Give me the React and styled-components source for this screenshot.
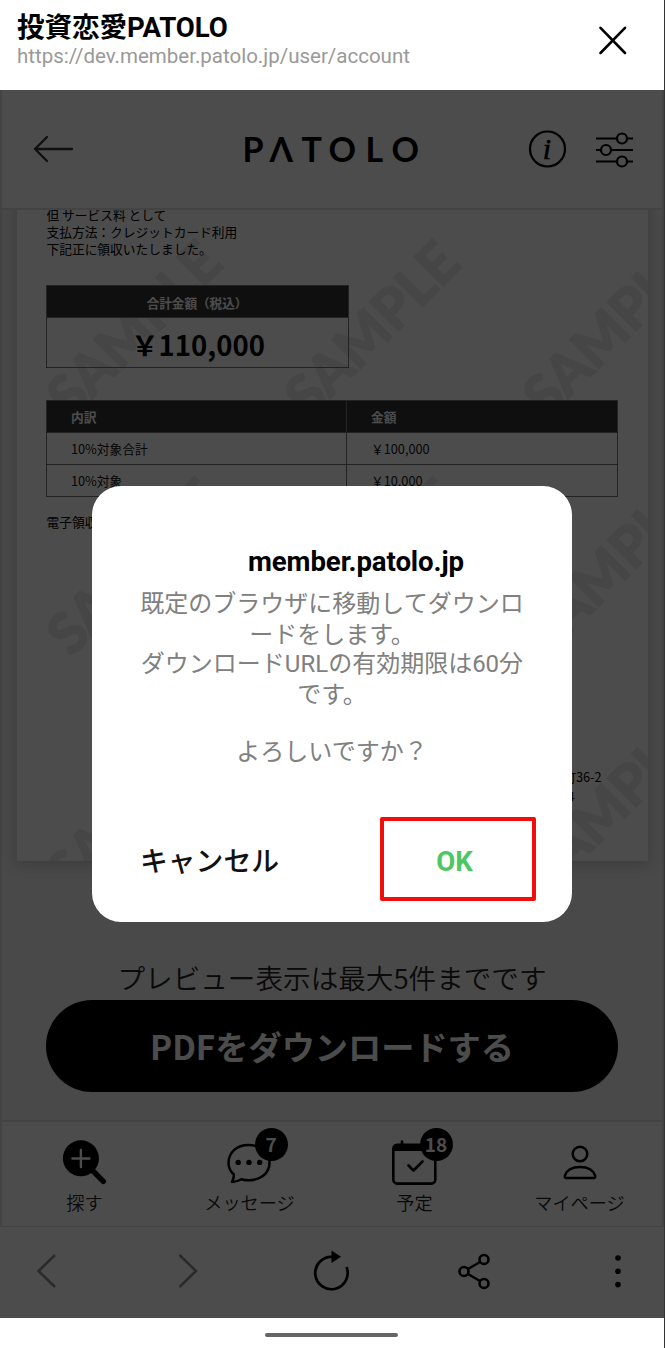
import React from "react";
import styled, { createGlobalStyle } from "styled-components";

const GlobalStyle = createGlobalStyle`
  * {
    box-sizing: border-box;
  }
  body {
    margin: 0;
    background: #fff;
  }
`;

const jp = `"Noto Sans CJK JP", sans-serif`;
const roboto = `Roboto, "Noto Sans CJK JP", sans-serif`;

const Screen = styled.div`
  position: relative;
  display: flex;
  flex-direction: column;
  width: 665px;
  height: 1348px;
  overflow: hidden;
  border-right: 1px solid #333;
  background: #fff;
  font-family: ${jp};
  color: #000;
`;

// Browser bar
const BrowserBar = styled.header`
  display: flex;
  justify-content: space-between;
  height: 90px;
  padding: 11px 36px 0 17px;
  font-family: ${roboto};
`;

const PageTitle = styled.div`
  height: 33px;
  line-height: 34px;
  font-size: 27.6px;
  font-weight: 700;
  letter-spacing: -0.1px;
  white-space: nowrap;
`;

const PageUrl = styled.div`
  height: 24px;
  line-height: 25px;
  font-size: 20.5px;
  color: #999;
`;

const CloseIcon = styled.svg`
  width: 30px;
  height: 30px;
  margin-top: 14px;
`;

// Page under the dialog
const Page = styled.div`
  position: relative;
  display: flex;
  flex-direction: column;
  height: 1228px;
`;

const Site = styled.div`
  display: flex;
  flex-direction: column;
  height: 1137px;
  border: solid #e0e0e0;
  border-width: 0 2px 1px;
  background: #f3f3f6;
`;

const SiteHeader = styled.div`
  position: relative;
  z-index: 1;
  display: flex;
  align-items: center;
  justify-content: space-between;
  height: 120px;
  padding: 0 27px 0 30px;
  border-bottom: 2px solid #e0e0e0;
  background: #fff;
`;

const BackIcon = styled.svg`
  width: 44px;
  height: 44px;
`;

const Logo = styled.div`
  display: flex;
  width: 180px;
  margin-left: 62px;
  font-family: Lato, Inter, sans-serif;
  font-size: 34px;
  font-weight: 700;
  line-height: 40px;
`;

const LogoLetter = styled.span`
  width: ${(props) => props.$width}px;
`;

const HeaderIcons = styled.div`
  display: flex;
  gap: 28px;

  svg {
    width: 40px;
    height: 40px;
  }
`;

const Content = styled.div`
  display: flex;
  flex-direction: column;
  align-items: center;
  height: 911px;
  overflow: hidden;
`;

const Receipt = styled.div`
  position: relative;
  flex: none;
  width: 631px;
  height: 671px;
  margin-top: -20px;
  padding: 16px 30px 0;
  background: #fff;
  box-shadow: 0 3px 14px rgba(0, 0, 0, 0.2);
  font-size: 12.73px;
  line-height: 17px;
`;

const WatermarkLayer = styled.div`
  position: absolute;
  inset: 0;
  overflow: hidden;
`;

const Watermark = styled.span`
  position: absolute;
  left: ${(props) => props.$x - 130}px;
  top: ${(props) => props.$y - 40}px;
  width: 260px;
  height: 80px;
  transform: rotate(-45deg);
  font-family: Lato, "Open Sans", sans-serif;
  font-size: 56px;
  font-weight: 700;
  line-height: 80px;
  text-align: center;
  color: #ebebeb;
  -webkit-text-stroke: 2px #ebebeb;
`;

const ReceiptBody = styled.div`
  position: relative;
`;

const AmountBox = styled.div`
  width: 303px;
  height: 83px;
  margin: 28px 0 0 -1px;
  border: 1px solid #777;
  text-align: center;
`;

const AmountLabel = styled.div`
  height: 32px;
  line-height: 33px;
  background: #333;
  border-bottom: 1px solid #777;
  color: #fff;
  font-weight: 700;
  font-size: 12.6px;
`;

const Amount = styled.div`
  height: 50px;
  padding-left: 2px;
  line-height: 52px;
  font-size: 27.5px;
  font-weight: 700;
`;

const Breakdown = styled.div`
  display: grid;
  grid-template-columns: 300px 271px;
  grid-template-rows: repeat(3, 32px);
  width: 572px;
  margin: 32px 0 0 -1px;
  border: solid #777;
  border-width: 1px 0 0 1px;
`;

const Cell = styled.div`
  padding-left: 24.5px;
  line-height: 32px;
  border: solid #777;
  border-width: 0 1px 1px 0;
  background: ${(props) => (props.$head ? "#333" : "none")};
  color: ${(props) => (props.$head ? "#fff" : "#111")};
  font-weight: ${(props) => (props.$head ? 700 : 400)};
`;

const Note = styled.div`
  margin-top: 16px;
`;

const Address = styled.div`
  display: flex;
  flex-direction: column;
  align-items: flex-end;
  margin-top: 237px;
  padding-right: 16px;
  line-height: 19px;

  span:last-child {
    margin-right: 27px;
  }
`;

const PreviewNote = styled.div`
  height: 40px;
  margin-top: 96px;
  font-size: 27.6px;
  font-weight: 350;
  line-height: 40px;
  color: #222;
`;

const DownloadButton = styled.button`
  flex: none;
  width: 572px;
  height: 92px;
  margin-top: 3px;
  padding: 0 0 1px;
  border: none;
  border-radius: 46px;
  background: #000;
  color: #fff;
  font-family: ${jp};
  font-size: 33.2px;
  font-weight: 700;
`;

const TabBar = styled.nav`
  display: grid;
  grid-template-columns: repeat(4, 1fr);
  height: 106px;
  border-top: 2px solid #e0e0e0;
  background: #fff;
`;

const Tab = styled.div`
  display: flex;
  flex-direction: column;
  align-items: center;
  padding-top: 4px;
`;

const TabIcon = styled.div`
  position: relative;
  width: 90px;
  height: 62px;
`;

const Badge = styled.span`
  position: absolute;
  left: 50px;
  top: 2px;
  width: 33px;
  height: 33px;
  border-radius: 50%;
  background: #000;
  color: #fff;
  font-size: 19px;
  font-weight: 700;
  line-height: 32px;
  text-align: center;
`;

const TabLabel = styled.div`
  font-size: 18.2px;
  font-weight: 350;
  line-height: 28px;
  color: #222;
`;

const Toolbar = styled.div`
  display: flex;
  align-items: center;
  justify-content: space-between;
  height: 91px;
  padding: 0 24px 2px;
  background: #fff;

  svg {
    width: 44px;
    height: 44px;
  }
`;

const Overlay = styled.div`
  position: absolute;
  inset: 0;
  z-index: 2;
  padding: 396px 0 0 92px;
  background: rgba(0, 0, 0, 0.7);
`;

// Dialog
const Dialog = styled.div`
  width: 480px;
  height: 436px;
  padding: 60px 36px 0 48px;
  border-radius: 29px;
  background: #fff;
  font-family: ${roboto};
`;

const DialogTitle = styled.div`
  height: 32px;
  padding-left: 108px;
  font-size: 27.6px;
  font-weight: 700;
  line-height: 31px;
  letter-spacing: -0.1px;
`;

const DialogText = styled.div`
  width: 384px;
  height: 177px;
  margin-top: 11px;
  color: #808080;
`;

const Line = styled.div`
  height: ${(props) => props.$height || 30}px;
  font-size: 24px;
  line-height: 30px;
  text-align: center;
  white-space: nowrap;
`;

const Actions = styled.div`
  display: flex;
  align-items: center;
  justify-content: space-between;
  height: 84px;
  margin-top: 51px;
`;

const CancelButton = styled.button`
  padding: 0;
  border: none;
  background: none;
  font-family: ${jp};
  font-size: 27.8px;
  font-weight: 500;
  color: #111;
`;

const OkButton = styled.button`
  width: 156px;
  height: 84px;
  padding: 5px 7px 0 0;
  border: 4px solid #f20d0d;
  border-radius: 2px;
  background: none;
  font-family: ${roboto};
  font-size: 27.6px;
  font-weight: 700;
  color: #4cc764;
`;

const GestureArea = styled.div`
  display: flex;
  justify-content: center;
  height: 30px;
  padding: 15px 1px 0 0;
`;

const Handle = styled.div`
  width: 133px;
  height: 4px;
  border-radius: 2px;
  background: #666;
`;

const logoLetters = [
  ["P", 27],
  ["Λ", 32],
  ["T", 27],
  ["O", 37],
  ["L", 26],
  ["O", 28],
];

const marks = [];
for (let row = 0; row < 4; row++) {
  for (let col = 0; col < 3; col++) {
    marks.push({ x: 116 + col * 238, y: 138 + row * 238 });
  }
}

const rows = [
  ["10%対象合計", "￥100,000"],
  ["10%対象", "￥10,000"],
];

const SearchIcon = () => (
  <svg width="90" height="62" fill="none" strokeLinecap="round">
    <path d="M52 44L63.3 55.3" stroke="#000" strokeWidth="5.4" />
    <circle cx="40.9" cy="32.3" r="18" fill="#000" />
    <path d="M40.9 24v17M32.4 32.5h17" stroke="#fff" strokeWidth="2.4" />
  </svg>
);

const MessageIcon = () => (
  <svg width="90" height="62" fill="none" stroke="#000" strokeWidth="2.5">
    <path
      d="M43.5 19C31.5 19 23.5 26.5 23.5 37c0 4.5 2 8.5 5.3 11.5c.3 3-.8 5.5-1.8 7.5c4-.3 7-1.3 9.500-2.800c2.300.8 4.500 1.100 7 1.100c12 0 21-7 21-17.600S55.500 19 43.500 19z"
      strokeLinejoin="round"
    />
    <g fill="#000" stroke="none">
      <circle cx="33.2" cy="36.4" r="2.7" />
      <circle cx="44" cy="36.4" r="2.7" />
      <circle cx="54.7" cy="36.4" r="2.7" />
    </g>
  </svg>
);

const CalendarIcon = () => (
  <svg width="90" height="62" fill="none" stroke="#000" strokeWidth="2.6">
    <rect x="23.3" y="18.8" width="42" height="38.8" rx="4" />
    <path d="M24 18.5h41v6.5h-41z" fill="#000" stroke="none" />
    <path d="M32 15.5v5" strokeLinecap="round" />
    <path
      d="M38.5 39.5l5 5l9-9"
      strokeLinecap="round"
      strokeLinejoin="round"
    />
  </svg>
);

const PersonIcon = () => (
  <svg width="90" height="62" fill="none" stroke="#000" strokeWidth="2.5">
    <circle cx="45" cy="28" r="7.3" />
    <path
      d="M31.5 52c-1.500 0-2-1-1.600-2.300C31.700 44 37.500 41 45 41s13.300 3 15.100 8.700c.4 1.300-.1 2.300-1.600 2.300z"
      strokeLinejoin="round"
    />
  </svg>
);

const tabs = [
  { label: "探す", icon: <SearchIcon /> },
  { label: "メッセージ", icon: <MessageIcon />, badge: 7 },
  { label: "予定", icon: <CalendarIcon />, badge: 18 },
  { label: "マイページ", icon: <PersonIcon /> },
];

const App = () => {
  return (
    <Screen>
      <GlobalStyle />
      <BrowserBar>
        <div>
          <PageTitle>投資恋愛PATOLO</PageTitle>
          <PageUrl>https://dev.member.patolo.jp/user/account</PageUrl>
        </div>
        <CloseIcon fill="none" stroke="#000" strokeWidth="2.6">
          <path
            d="M2.5 2.8L27 28M27 2.8L2.5 28"
            strokeLinecap="round"
          />
        </CloseIcon>
      </BrowserBar>

      <Page>
        <Site>
          <SiteHeader>
            <BackIcon fill="none" stroke="#333" strokeWidth="2.3">
              <path
                d="M15 10L3 22l12 12M3 22h37"
                strokeLinecap="round"
                strokeLinejoin="round"
              />
            </BackIcon>
            <Logo>
              {logoLetters.map(([letter, width], i) => (
                <LogoLetter key={i} $width={width}>
                  {letter}
                </LogoLetter>
              ))}
            </Logo>
            <HeaderIcons>
              <svg fill="none" stroke="#000" strokeWidth="2.2">
                <circle cx="20.5" cy="20" r="17.5" />
                <text
                  x="20"
                  y="29.5"
                  fill="#000"
                  strokeWidth="0.6"
                  textAnchor="middle"
                  fontFamily="Liberation Serif, serif"
                  fontSize="30"
                  fontStyle="italic"
                >
                  i
                </text>
              </svg>
              <svg fill="none" stroke="#000" strokeWidth="2.2">
                <path d="M1 9.5h21M32 9.5h6M1 21h5M16 21h22M1 32.5h21M32 32.5h6" />
                <circle cx="27" cy="9.5" r="5" />
                <circle cx="11" cy="21" r="5" />
                <circle cx="27" cy="32.5" r="5" />
              </svg>
            </HeaderIcons>
          </SiteHeader>

          <Content>
            <Receipt>
              <WatermarkLayer>
                {marks.map((mark, i) => (
                  <Watermark key={i} $x={mark.x} $y={mark.y}>
                    SAMPLE
                  </Watermark>
                ))}
              </WatermarkLayer>
              <ReceiptBody>
                <div>但 サービス料 として</div>
                <div>支払方法：クレジットカード利用</div>
                <div>下記正に領収いたしました。</div>
                <AmountBox>
                  <AmountLabel>合計金額（税込）</AmountLabel>
                  <Amount>￥110,000</Amount>
                </AmountBox>
                <Breakdown>
                  <Cell $head>内訳</Cell>
                  <Cell $head>金額</Cell>
                  {rows.map(([name, price]) => (
                    <React.Fragment key={name}>
                      <Cell>{name}</Cell>
                      <Cell>{price}</Cell>
                    </React.Fragment>
                  ))}
                </Breakdown>
                <Note>電子領収</Note>
                <Address>
                  <span>町36-2</span>
                  <span>4</span>
                </Address>
              </ReceiptBody>
            </Receipt>
            <PreviewNote>プレビュー表示は最大5件までです</PreviewNote>
            <DownloadButton>PDFをダウンロードする</DownloadButton>
          </Content>

          <TabBar>
            {tabs.map((tab) => (
              <Tab key={tab.label}>
                <TabIcon>
                  {tab.icon}
                  {tab.badge ? <Badge>{tab.badge}</Badge> : ""}
                </TabIcon>
                <TabLabel>{tab.label}</TabLabel>
              </Tab>
            ))}
          </TabBar>
        </Site>

        <Toolbar>
          <svg fill="none" stroke="#8c8c8c" strokeWidth="2.5">
            <path d="M31 5L14.5 21L31 37" />
          </svg>
          <svg fill="none" stroke="#8c8c8c" strokeWidth="2.5">
            <path d="M12.5 5L29 21L12.5 37" />
          </svg>
          <svg fill="none" stroke="#000" strokeWidth="2.7">
            <path d="M23 6.8H21.5A16.2 16.2 0 1 0 36.5 17" />
            <path d="M21.5 0.5L31 6.8L21.5 13z" fill="#000" stroke="none" />
          </svg>
          <svg fill="none" stroke="#000" strokeWidth="2.6">
            <circle cx="11" cy="21.5" r="4.5" />
            <circle cx="31" cy="9.5" r="4.5" />
            <circle cx="31" cy="33.5" r="4.5" />
            <path d="M15 19L27 12M15 24L27 31" />
          </svg>
          <svg fill="#000">
            <circle cx="22" cy="8" r="2.8" />
            <circle cx="22" cy="21.3" r="2.8" />
            <circle cx="22" cy="34.6" r="2.8" />
          </svg>
        </Toolbar>

        <Overlay>
          <Dialog>
            <DialogTitle>member.patolo.jp</DialogTitle>
            <DialogText>
              <Line $height={31}>既定のブラウザに移動してダウンロ</Line>
              <Line $height={29}>ードをします。</Line>
              <Line $height={31}>ダウンロードURLの有効期限は60分</Line>
              <Line $height={57}>です。</Line>
              <Line>よろしいですか？</Line>
            </DialogText>
            <Actions>
              <CancelButton>キャンセル</CancelButton>
              <OkButton>OK</OkButton>
            </Actions>
          </Dialog>
        </Overlay>
      </Page>

      <GestureArea>
        <Handle />
      </GestureArea>
    </Screen>
  );
};

export default App;
